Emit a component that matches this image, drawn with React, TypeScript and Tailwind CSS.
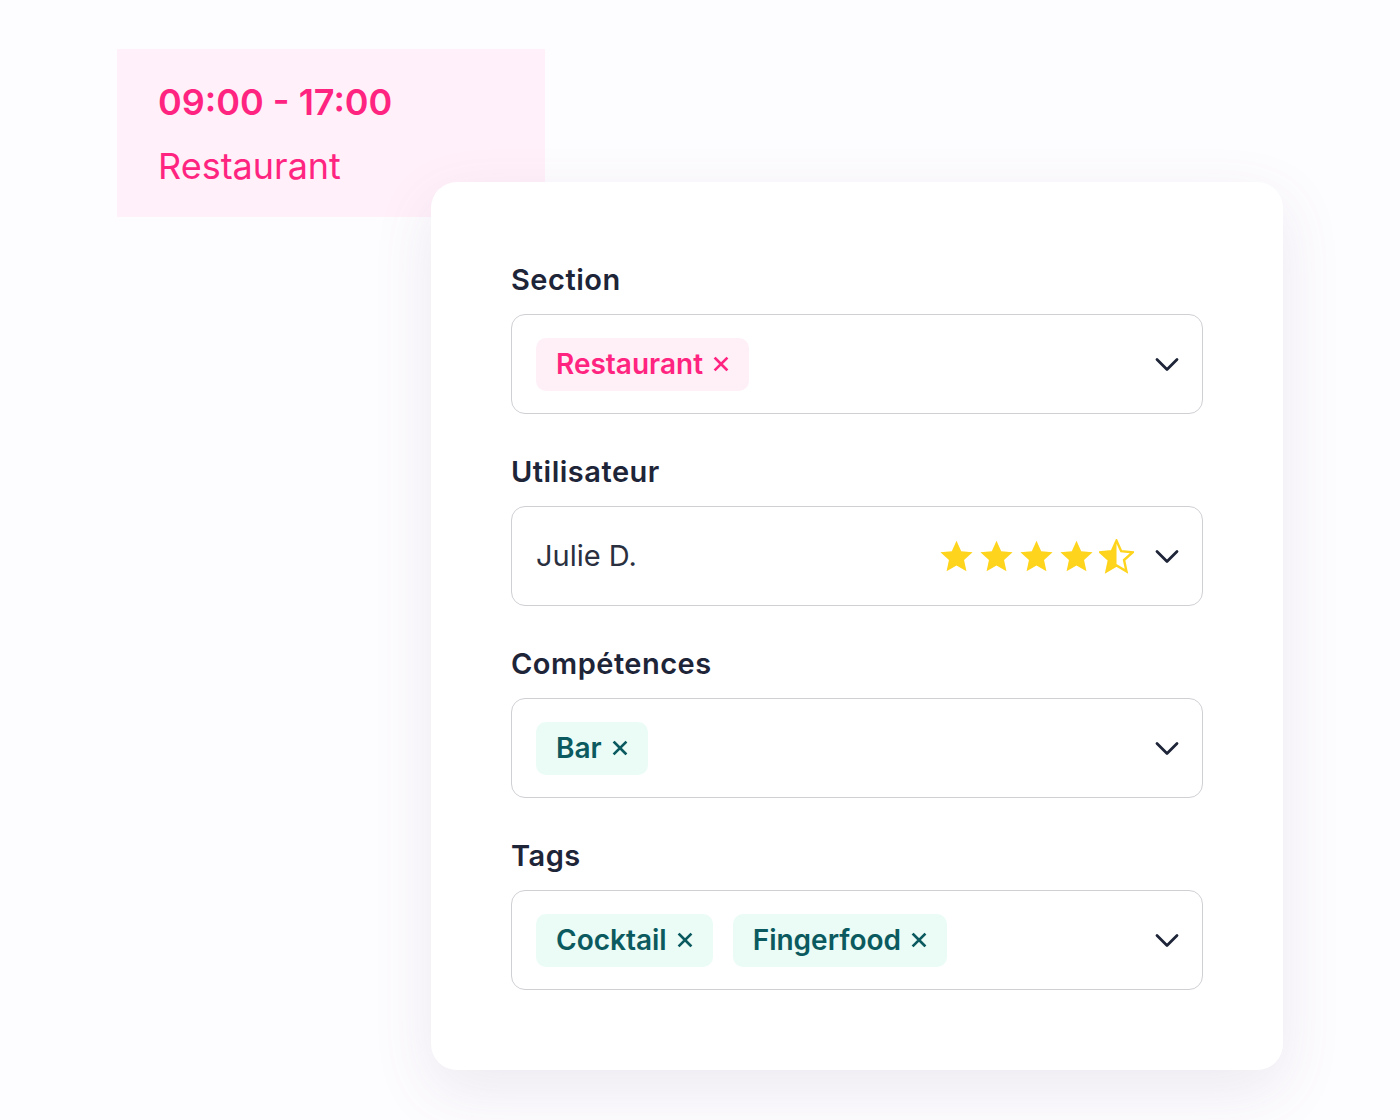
import React from 'react';

const font = { fontFamily: 'Inter, "Noto Sans", sans-serif' };

const Chevron = () => (
  <svg width="26" height="26" viewBox="0 0 26 26" fill="none" className="shrink-0">
    <path d="M3 8.5l10 10 10-10" stroke="#1e2538" strokeWidth="2.8" strokeLinecap="round" strokeLinejoin="round" />
  </svg>
);

const Cross = () => (
  <svg width="16" height="16" viewBox="0 0 16 16" fill="none">
    <path d="M2.5 2.5l11 11M13.5 2.5l-11 11" stroke="currentColor" strokeWidth="2.6" strokeLinecap="square" />
  </svg>
);

const STAR = 'M16 1.5l4.3 9.6 10.4 1.1-7.8 7 2.2 10.3L16 24.2 6.9 29.5l2.2-10.3-7.8-7 10.4-1.1z';

const Star = ({ half = false }: { half?: boolean }) => (
  <svg width="35" height="35" viewBox="0 0 32 32">
    <defs>
      <clipPath id="halfclip">
        <rect x="0" y="0" width="16" height="32" />
      </clipPath>
    </defs>
    {half ? (
      <>
        <path d={STAR} fill="none" stroke="#fed41c" strokeWidth="2.2" strokeLinejoin="miter" />
        <path d={STAR} fill="#fed41c" clipPath="url(#halfclip)" />
      </>
    ) : (
      <path d={STAR} fill="#fed41c" />
    )}
  </svg>
);

const Chip = ({ label, tone }: { label: string; tone: 'pink' | 'teal' }) => (
  <span
    className={
      'inline-flex items-center gap-[10px] h-[53px] px-5 rounded-[10px] text-[28px] font-semibold ' +
      (tone === 'pink' ? 'bg-[#fff0f8] text-[#ff2480]' : 'bg-[#eafcf5] text-[#0a5a60]')
    }
  >
    {label}
    <Cross />
  </span>
);

const Field = ({ label, children }: { label: string; children: React.ReactNode }) => (
  <div>
    <div className="text-[29px] leading-[36px] tracking-[0.5px] font-semibold text-[#1e2538] mb-4">{label}</div>
    <div className="h-[100px] border border-[#cfd0d4] rounded-[14px] flex items-center pl-6 pr-[22px]">
      <div className="flex-1 flex items-center gap-5">{children}</div>
      <Chevron />
    </div>
  </div>
);

export default function App() {
  return (
    <div className="w-[1400px] h-[1120px] bg-[#fdfcfe] relative overflow-hidden" style={font}>
      <div className="absolute left-[117px] top-[49px] w-[428px] h-[168px] bg-[#fff0f9] pl-[41px] pt-[21px]">
        <div className="text-[36px] leading-[64px] font-semibold text-[#ff2480]">09:00 - 17:00</div>
        <div className="text-[36px] leading-[64px] text-[#ff2480]">Restaurant</div>
      </div>

      <div className="absolute left-[431px] top-[182px] w-[852px] h-[888px] bg-white rounded-[26px] shadow-[0_20px_60px_rgba(120,100,150,0.12)] p-20 flex flex-col gap-10">
        <Field label="Section">
          <Chip label="Restaurant" tone="pink" />
        </Field>
        <Field label="Utilisateur">
          <span className="flex-1 text-[29px] text-[#2a3040]">Julie D.</span>
          <div className="flex items-center gap-[5px] mr-[20px]">
            <Star />
            <Star />
            <Star />
            <Star />
            <Star half />
          </div>
        </Field>
        <Field label="Compétences">
          <Chip label="Bar" tone="teal" />
        </Field>
        <Field label="Tags">
          <Chip label="Cocktail" tone="teal" />
          <Chip label="Fingerfood" tone="teal" />
        </Field>
      </div>
    </div>
  );
}
